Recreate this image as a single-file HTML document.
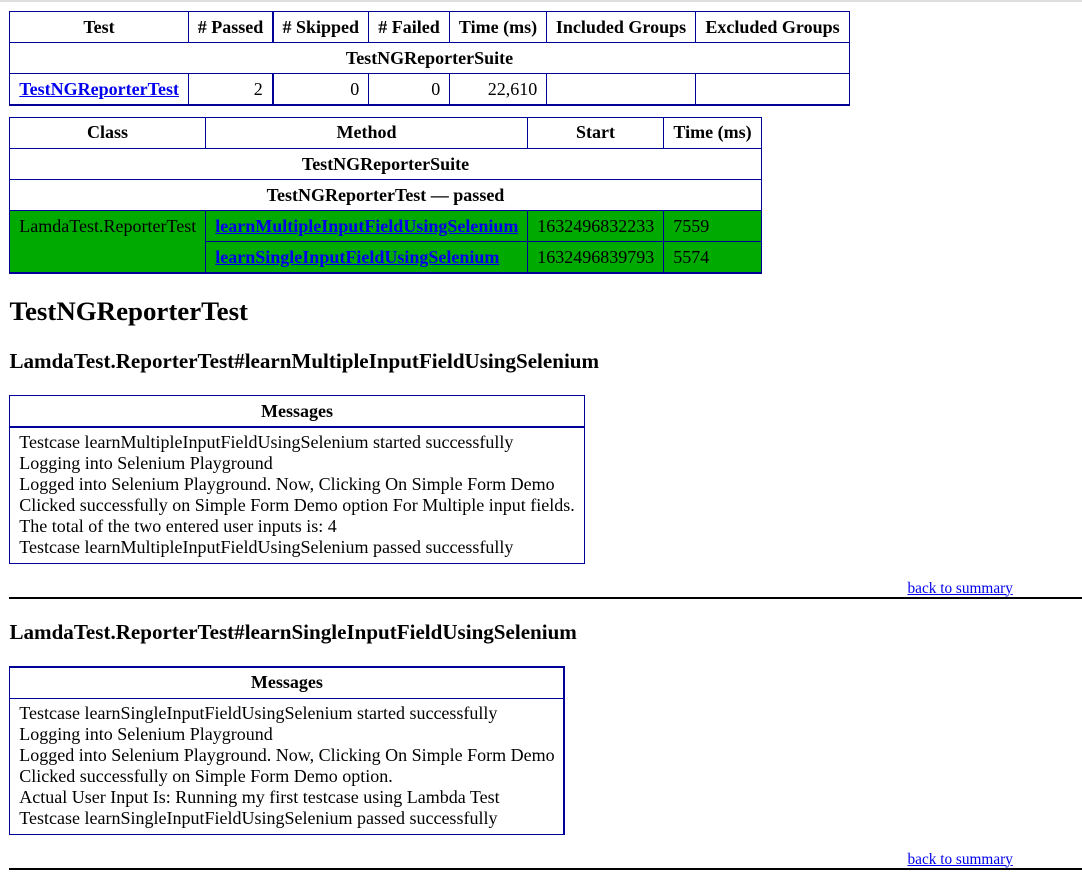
<!DOCTYPE html>
<html lang="en">
<head>
<meta charset="utf-8">
<title>TestNG Report</title>
<style>
html,body{margin:0;padding:0;background:#fff;}
body{width:1082px;height:878px;position:relative;overflow:hidden;font-family:"Liberation Serif","Times New Roman",serif;font-size:18px;line-height:21px;color:#000;}
#bar{position:absolute;left:0;top:0;width:1082px;height:2px;background:#dedede;}
table{position:absolute;border-collapse:collapse;table-layout:fixed;empty-cells:show;}
th,td{border:1px solid #009;padding:4.4px 8.8px 4.4px 9.3px;font-size:18px;line-height:21px;box-sizing:border-box;overflow:visible;white-space:nowrap;}
th{vertical-align:bottom;text-align:center;font-weight:bold;padding-left:8.8px;}
td{vertical-align:top;}
table a{font-weight:bold;}
a{color:#00e;text-decoration:underline;}
.num{text-align:right;}
.g td{background:#0a0;padding-top:5.4px;padding-bottom:3.4px;}
.b2 td{border-bottom-width:2px;padding-top:5.4px;padding-bottom:2.9px;}
.up th{padding-top:3.4px;padding-bottom:5.4px;}
.wl{border-left-width:2px;}
h2,h3{position:absolute;left:9.5px;margin:0;font-weight:bold;white-space:nowrap;}
h2{font-size:26.9px;line-height:30px;top:296px;}
h3{font-size:21.06px;line-height:24px;}
.totop{position:absolute;left:9px;width:1073px;height:2px;background:#000;}
.back{position:absolute;left:907.5px;font-size:15.3px;line-height:17px;font-weight:normal;white-space:nowrap;}
</style>
</head>
<body>
<div id="bar"></div>

<table style="left:9px;top:11px;width:840px;">
<colgroup><col style="width:179px"><col style="width:84px"><col style="width:96px"><col style="width:81px"><col style="width:97px"><col style="width:149px"><col style="width:154px"></colgroup>
<tr style="height:31px"><th>Test</th><th># Passed</th><th class="wl"># Skipped</th><th># Failed</th><th>Time (ms)</th><th>Included Groups</th><th>Excluded Groups</th></tr>
<tr style="height:31px"><th colspan="7">TestNGReporterSuite</th></tr>
<tr class="b2" style="height:31px"><td><a href="#t0">TestNGReporterTest</a></td><td class="num">2</td><td class="num wl">0</td><td class="num">0</td><td class="num">22,610</td><td></td><td></td></tr>
</table>

<table style="left:9px;top:117px;width:753px;">
<colgroup><col style="width:196px"><col style="width:322px"><col style="width:136px"><col style="width:98px"></colgroup>
<tr class="up" style="height:31px"><th>Class</th><th>Method</th><th>Start</th><th>Time (ms)</th></tr>
<tr style="height:31px"><th colspan="4">TestNGReporterSuite</th></tr>
<tr style="height:31px"><th colspan="4">TestNGReporterTest — passed</th></tr>
<tr class="g" style="height:31px"><td rowspan="2" style="border-bottom-width:2px">LamdaTest.ReporterTest</td><td><a href="#m0">learnMultipleInputFieldUsingSelenium</a></td><td>1632496832233</td><td>7559</td></tr>
<tr class="g b2" style="height:31px"><td><a href="#m1">learnSingleInputFieldUsingSelenium</a></td><td>1632496839793</td><td>5574</td></tr>
</table>

<h2>TestNGReporterTest</h2>
<h3 style="top:349px">LamdaTest.ReporterTest#learnMultipleInputFieldUsingSelenium</h3>

<table style="left:9px;top:395px;width:576px;">
<colgroup><col style="width:575px"></colgroup>
<tr style="height:31px"><th style="border-bottom-width:2px;padding-bottom:3.4px">Messages</th></tr>
<tr><td style="padding-top:4.4px;padding-bottom:5px">
<div>Testcase learnMultipleInputFieldUsingSelenium started successfully</div>
<div>Logging into Selenium Playground</div>
<div>Logged into Selenium Playground. Now, Clicking On Simple Form Demo</div>
<div>Clicked successfully on Simple Form Demo option For Multiple input fields.</div>
<div>The total of the two entered user inputs is: 4</div>
<div>Testcase learnMultipleInputFieldUsingSelenium passed successfully</div>
</td></tr>
</table>
<a class="back" href="#summary" style="top:579.5px">back to summary</a>
<div class="totop" style="top:597px"></div>

<h3 style="top:620px">LamdaTest.ReporterTest#learnSingleInputFieldUsingSelenium</h3>

<table style="left:9px;top:666px;width:555px;">
<colgroup><col style="width:554px"></colgroup>
<tr style="height:31px"><th style="border-top-width:2px;border-right-width:2px;padding-left:10px">Messages</th></tr>
<tr><td style="border-right-width:2px;padding-top:4.4px;padding-bottom:5px">
<div>Testcase learnSingleInputFieldUsingSelenium started successfully</div>
<div>Logging into Selenium Playground</div>
<div>Logged into Selenium Playground. Now, Clicking On Simple Form Demo</div>
<div>Clicked successfully on Simple Form Demo option.</div>
<div>Actual User Input Is: Running my first testcase using Lambda Test</div>
<div>Testcase learnSingleInputFieldUsingSelenium passed successfully</div>
</td></tr>
</table>
<a class="back" href="#summary" style="top:850.5px">back to summary</a>
<div class="totop" style="top:868px"></div>
</body>
</html>
